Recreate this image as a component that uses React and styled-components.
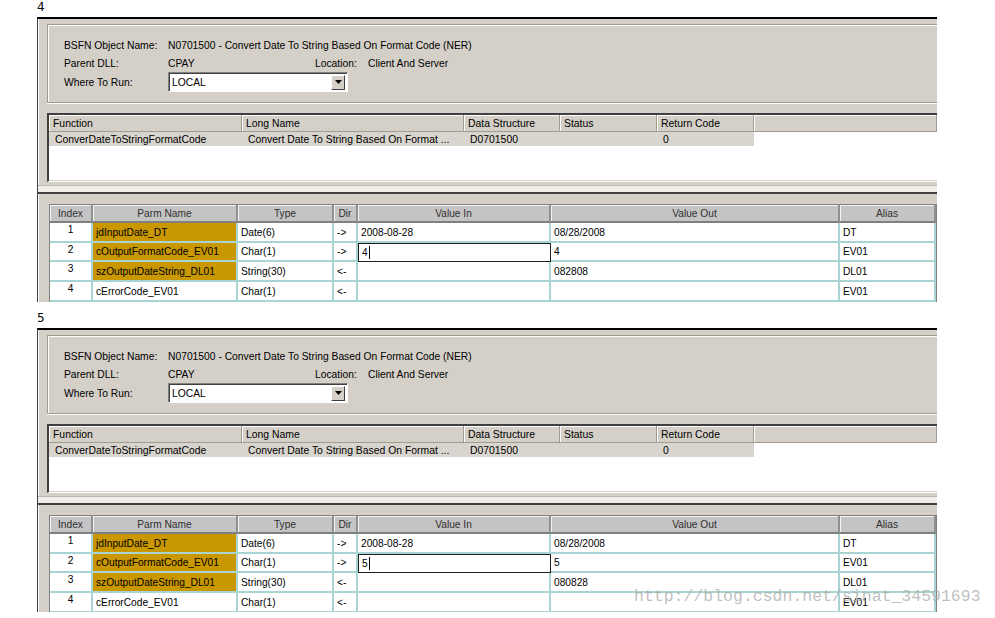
import React from "react";
import styled, { createGlobalStyle } from "styled-components";

const GlobalStyle = createGlobalStyle`
  html, body {
    margin: 0;
    padding: 0;
    background: #ffffff;
  }
`;

const Page = styled.div`
  position: relative;
  width: 995px;
  height: 618px;
  overflow: hidden;
  background: #ffffff;
`;

const StepLabel = styled.div`
  height: ${(p) => p.h}px;
  padding-left: 37px;
  box-sizing: border-box;
  display: flex;
  align-items: flex-end;
  padding-bottom: ${(p) => p.pb}px;
  font: 12px "DejaVu Sans", sans-serif;
  color: #000;
`;

const Window = styled.div`
  margin-left: 37px;
  width: 900px;
  height: ${(p) => p.h}px;
  box-sizing: border-box;
  background: #d4d0c8;
  border-top: 2px solid #000;
  border-left: 1px solid #404040;
  box-shadow: inset 1px 0 0 #ffffff;
  display: flex;
  flex-direction: column;
  overflow: hidden;
`;

const UpperPane = styled.div`
  padding: 5px 0 3px 9px;
  display: flex;
  flex-direction: column;
  gap: 10px;
`;

const InfoBox = styled.div`
  height: 79px;
  box-sizing: border-box;
  border-top: 1px solid #a09c94;
  border-left: 1px solid #a09c94;
  border-bottom: 1px solid #a09c94;
  box-shadow: inset 1px 1px 0 #ffffff, 0 1px 0 #ffffff;
  padding: 11px 0 0 16px;
  display: grid;
  grid-template-columns: 104px 147px 53px auto;
  grid-auto-rows: 18.5px;
  align-items: center;
  font: 10.3px "Liberation Sans", Arial, sans-serif;
  color: #000;
`;

const Wide = styled.div`
  grid-column: 2 / span 3;
`;

const ComboCell = styled.div`
  grid-column: 2 / span 3;
`;

const Combo = styled.div`
  width: 180px;
  height: 20px;
  box-sizing: border-box;
  background: #fff;
  border-top: 1px solid #808080;
  border-left: 1px solid #808080;
  border-right: 1px solid #fff;
  border-bottom: 1px solid #fff;
  box-shadow: inset 1px 1px 0 #404040;
  display: flex;
  align-items: center;
  justify-content: space-between;
  padding: 0 2px 0 3px;
  font: 10.3px "Liberation Sans", Arial, sans-serif;
`;

const ComboButton = styled.div`
  width: 14px;
  height: 15px;
  box-sizing: border-box;
  background: #d4d0c8;
  border-top: 1px solid #fff;
  border-left: 1px solid #fff;
  border-right: 1px solid #404040;
  border-bottom: 1px solid #404040;
  display: flex;
  align-items: center;
  justify-content: center;
`;

const FuncList = styled.div`
  height: 69px;
  box-sizing: border-box;
  background: #fff;
  border-top: 2px solid #404040;
  border-left: 2px solid #404040;
  border-bottom: 1px solid #fff;
  box-shadow: inset 0 -1px 0 #d4d0c8;
  font: 10.4px "Liberation Sans", Arial, sans-serif;
`;

const FuncRow = styled.div`
  display: grid;
  grid-template-columns: 193px 222px 96px 97px 97px 1fr;
  height: ${(p) => p.h}px;
  align-items: center;
`;

const FuncHead = styled.div`
  height: 100%;
  box-sizing: border-box;
  background: #d4d0c8;
  border-right: 1px solid #a09c94;
  border-bottom: 1px solid #a09c94;
  box-shadow: inset 1px 1px 0 #fff;
  padding-left: 4px;
  display: flex;
  align-items: center;
  color: #000;
`;

const FuncCell = styled.div`
  height: 100%;
  background: ${(p) => (p.blank ? "#fff" : "#d8d5ce")};
  padding-left: 6px;
  display: flex;
  align-items: center;
  white-space: nowrap;
  overflow: hidden;
`;

const Splitter = styled.div`
  height: 6px;
  background: #efede8;
  border-top: 1px solid #bdb9b1;
`;

const LowerPane = styled.div`
  flex: 1;
  border-top: 2px solid #404040;
  padding: 10px 0 0 11px;
  overflow: hidden;
`;

const Grid = styled.div`
  border-left: 1px solid #808080;
  border-right: 2px solid #808080;
  width: 889px;
  box-sizing: border-box;
  font: 10.2px "Liberation Sans", Arial, sans-serif;
  color: #000;
`;

const GridRow = styled.div`
  display: grid;
  grid-template-columns: 43px 145px 96px 24px 193px 289px 96px;
  height: ${(p) => p.h}px;
`;

const HeadCell = styled.div`
  background: #c4c4c4;
  box-sizing: border-box;
  border-top: 1px solid #808080;
  border-right: 2px solid #909090;
  border-bottom: 2px solid #808080;
  box-shadow: inset 1px 1px 0 #f4f4f4;
  display: flex;
  align-items: center;
  justify-content: center;
  color: #303030;
`;

const Cell = styled.div`
  box-sizing: border-box;
  background: ${(p) => (p.gold ? "#c99700" : "#fff")};
  border-right: 2px solid #a8d4d4;
  border-bottom: 2px solid #a8d4d4;
  display: flex;
  align-items: ${(p) => (p.top ? "flex-start" : "center")};
  justify-content: ${(p) => (p.center ? "center" : "flex-start")};
  padding: ${(p) => (p.top ? "1px 0 0 0" : "0 0 0 3px")};
  white-space: nowrap;
  overflow: hidden;
`;

const EditCell = styled.div`
  box-sizing: border-box;
  background: #fff;
  border: 1px solid #202020;
  display: flex;
  align-items: center;
  padding-left: 3px;
`;

const Caret = styled.span`
  display: inline-block;
  width: 1px;
  height: 13px;
  margin-left: 1px;
  background: #000;
`;

const Watermark = styled.div`
  position: absolute;
  left: 634px;
  top: 587px;
  font: 16.5px "Liberation Mono", "DejaVu Sans Mono", monospace;
  color: rgba(170, 170, 170, 0.75);
  white-space: nowrap;
  pointer-events: none;
`;

const funcHeads = ["Function", "Long Name", "Data Structure", "Status", "Return Code", ""];
const funcData = [
  "ConverDateToStringFormatCode",
  "Convert Date To String Based On Format ...",
  "D0701500",
  "",
  "0",
];

const gridHeads = ["Index", "Parm Name", "Type", "Dir", "Value In", "Value Out", "Alias"];

const makeRows = (code, out) => [
  { idx: "1", name: "jdInputDate_DT", gold: true, type: "Date(6)", dir: "->", vin: "2008-08-28", vout: "08/28/2008", alias: "DT" },
  { idx: "2", name: "cOutputFormatCode_EV01", gold: true, type: "Char(1)", dir: "->", vin: code, edit: true, vout: code, alias: "EV01" },
  { idx: "3", name: "szOutputDateString_DL01", gold: true, type: "String(30)", dir: "<-", vin: "", vout: out, alias: "DL01" },
  { idx: "4", name: "cErrorCode_EV01", gold: false, type: "Char(1)", dir: "<-", vin: "", vout: "", alias: "EV01" },
];

const rowHeights = [20, 19, 20, 20];

const TestWindow = ({ rows, height }) => (
  <Window h={height}>
    <UpperPane>
      <InfoBox>
        <div>BSFN Object Name:</div>
        <Wide>N0701500 - Convert Date To String Based On Format Code (NER)</Wide>
        <div>Parent DLL:</div>
        <div>CPAY</div>
        <div>Location:</div>
        <div>Client And Server</div>
        <div>Where To Run:</div>
        <ComboCell>
          <Combo>
            <span>LOCAL</span>
            <ComboButton>
              <svg width="7" height="4" viewBox="0 0 7 4">
                <path d="M0 0h7L3.5 4z" fill="#000" />
              </svg>
            </ComboButton>
          </Combo>
        </ComboCell>
      </InfoBox>
      <FuncList>
        <FuncRow h={17}>
          {funcHeads.map((h, i) => (
            <FuncHead key={i}>{h}</FuncHead>
          ))}
        </FuncRow>
        <FuncRow h={14}>
          {funcData.map((d, i) => (
            <FuncCell key={i}>{d}</FuncCell>
          ))}
          <FuncCell blank />
        </FuncRow>
      </FuncList>
    </UpperPane>
    <Splitter />
    <LowerPane>
      <Grid>
        <GridRow h={19}>
          {gridHeads.map((h) => (
            <HeadCell key={h}>{h}</HeadCell>
          ))}
        </GridRow>
        {rows.map((r, i) => (
          <GridRow key={r.idx} h={rowHeights[i]}>
            <Cell center top>{r.idx}</Cell>
            <Cell gold={r.gold}>{r.name}</Cell>
            <Cell>{r.type}</Cell>
            <Cell>{r.dir}</Cell>
            {r.edit ? (
              <EditCell>
                {r.vin}
                <Caret />
              </EditCell>
            ) : (
              <Cell>{r.vin}</Cell>
            )}
            <Cell>{r.vout}</Cell>
            <Cell>{r.alias}</Cell>
          </GridRow>
        ))}
      </Grid>
    </LowerPane>
  </Window>
);

export default function App() {
  return (
    <Page>
      <GlobalStyle />
      <StepLabel h={17} pb={3}>4</StepLabel>
      <TestWindow rows={makeRows("4", "082808")} height={285} />
      <StepLabel h={26} pb={3}>5</StepLabel>
      <TestWindow rows={makeRows("5", "080828")} height={284} />
      <Watermark>http://blog.csdn.net/sinat_34591693</Watermark>
    </Page>
  );
}
